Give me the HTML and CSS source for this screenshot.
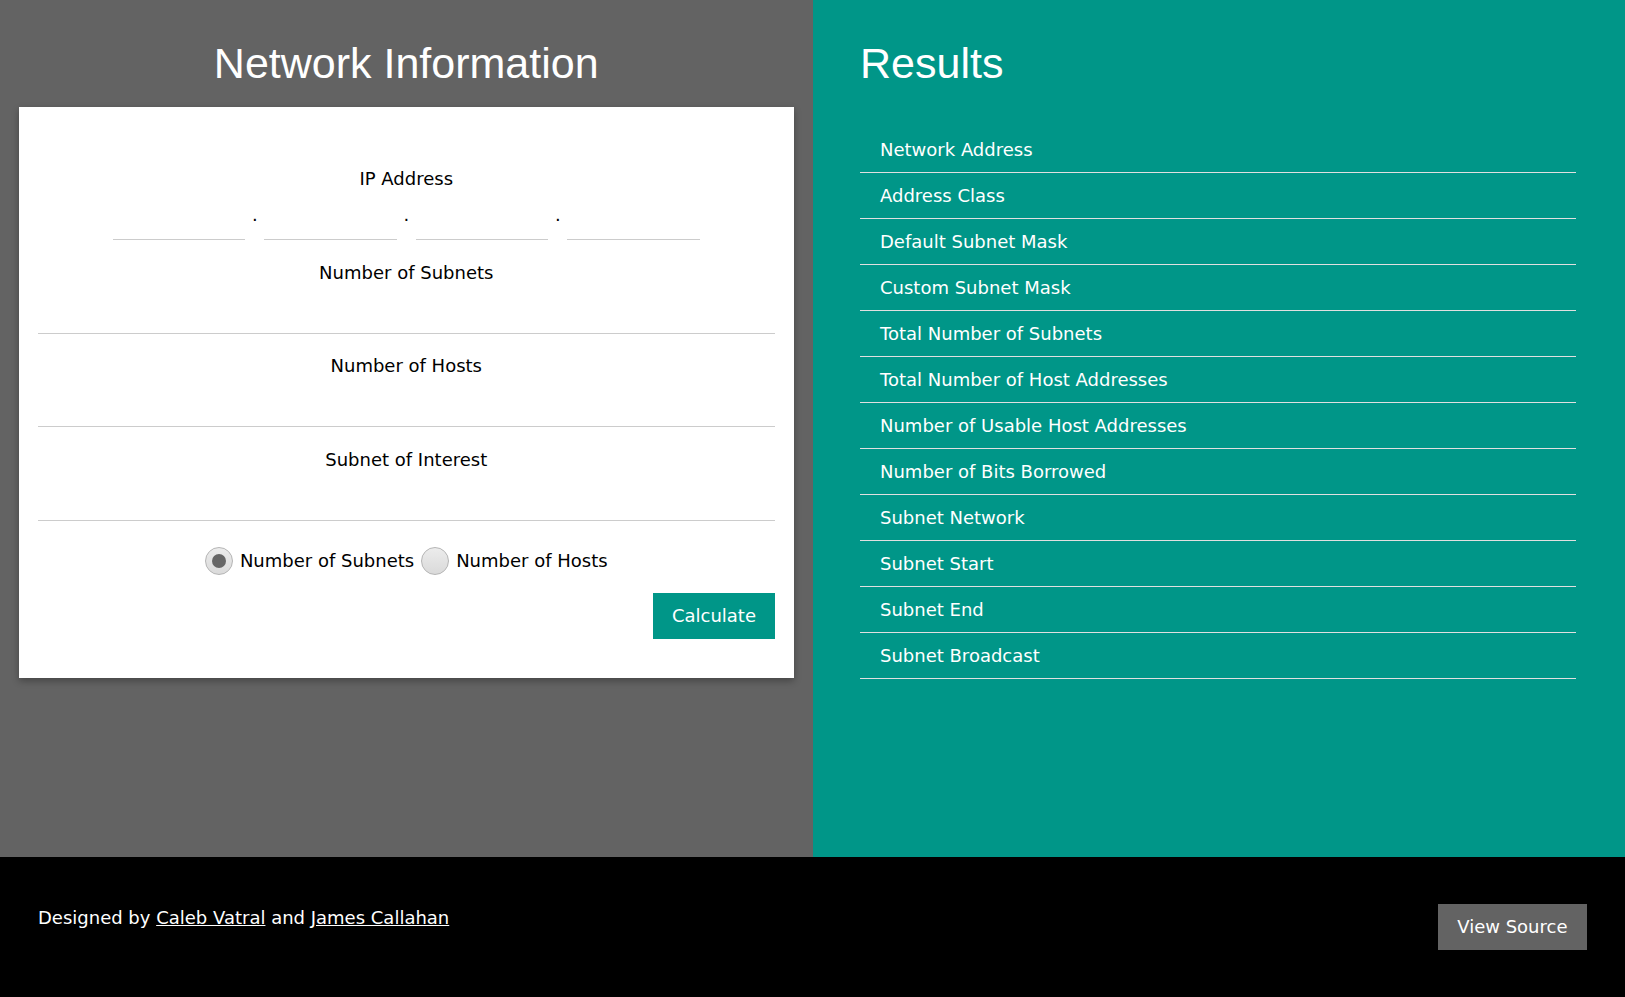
FILE: index.html
```html
<!DOCTYPE html>
<html lang="en">
<head>
<meta charset="utf-8">
<title>Subnet Calculator</title>
<link rel="stylesheet" href="styles.css">
</head>
<body>
<main class="layout">
  <section class="panel panel-info">
    <h1 class="panel-title panel-title-center">Network Information</h1>
    <form class="card">
      <div class="field">
        <label class="field-label">IP Address</label>
        <div class="ip-row">
          <input class="ip-octet" type="text"><span class="ip-dot">.</span><input class="ip-octet" type="text"><span class="ip-dot">.</span><input class="ip-octet" type="text"><span class="ip-dot">.</span><input class="ip-octet" type="text">
        </div>
      </div>
      <div class="field">
        <label class="field-label">Number of Subnets</label>
        <input class="field-input" type="text">
      </div>
      <div class="field">
        <label class="field-label">Number of Hosts</label>
        <input class="field-input" type="text">
      </div>
      <div class="field">
        <label class="field-label">Subnet of Interest</label>
        <input class="field-input" type="text">
      </div>
      <div class="radio-row">
        <input class="radio" type="radio" name="mode" id="mode-subnets" checked>
        <label class="radio-label" for="mode-subnets">Number of Subnets</label>
        <input class="radio" type="radio" name="mode" id="mode-hosts">
        <label class="radio-label" for="mode-hosts">Number of Hosts</label>
      </div>
      <div class="actions">
        <button class="btn btn-teal" type="button">Calculate</button>
      </div>
    </form>
  </section>
  <section class="panel panel-results">
    <h1 class="panel-title">Results</h1>
    <ul class="results-list">
      <li class="result-item">Network Address</li>
      <li class="result-item">Address Class</li>
      <li class="result-item">Default Subnet Mask</li>
      <li class="result-item">Custom Subnet Mask</li>
      <li class="result-item">Total Number of Subnets</li>
      <li class="result-item">Total Number of Host Addresses</li>
      <li class="result-item">Number of Usable Host Addresses</li>
      <li class="result-item">Number of Bits Borrowed</li>
      <li class="result-item">Subnet Network</li>
      <li class="result-item">Subnet Start</li>
      <li class="result-item">Subnet End</li>
      <li class="result-item">Subnet Broadcast</li>
    </ul>
  </section>
</main>
<footer class="footer">
  <p class="footer-text">Designed by <a class="footer-link" href="#">Caleb Vatral</a> and <a class="footer-link" href="#">James Callahan</a></p>
  <a class="btn btn-gray" href="#">View Source</a>
</footer>
</body>
</html>
```

FILE: styles.css
```css
* {
  box-sizing: border-box;
}

html, body {
  margin: 0;
  padding: 0;
}

body {
  font-family: "DejaVu Sans", Verdana, sans-serif;
  font-size: 18px;
  line-height: 22px;
  color: #000;
  background: #000;
}

.layout {
  display: grid;
  grid-template-columns: 1fr 1fr;
  height: 857px;
}

.panel {
  padding-top: 39px;
}

.panel-info {
  background: #636363;
  padding-left: 19px;
  padding-right: 19px;
}

.panel-results {
  background: #009688;
  padding-left: 47.5px;
  padding-right: 49px;
}

.panel-title {
  margin: 0;
  font-family: "Liberation Sans", Arial, sans-serif;
  font-weight: normal;
  font-size: 43px;
  line-height: 49px;
  color: #fff;
}

.panel-title-center {
  text-align: center;
}

.card {
  margin-top: 19px;
  background: #fff;
  padding: 61px 19px 39px;
  box-shadow: 0 3px 7px rgba(0, 0, 0, 0.3);
}

.field + .field {
  margin-top: 21.5px;
}

.field-label {
  display: block;
  text-align: center;
  line-height: 22px;
}

.field-input,
.ip-octet {
  display: block;
  height: 50px;
  border: none;
  border-bottom: 1px solid #cccccc;
  background: transparent;
  font-family: inherit;
  font-size: 18px;
  text-align: center;
  outline: none;
  padding: 0;
  border-radius: 0;
}

.field-input {
  width: 100%;
}

.ip-row {
  display: flex;
  justify-content: center;
  align-items: center;
  height: 50px;
}

.ip-octet {
  width: 132.5px;
}

.ip-dot {
  width: 19px;
  text-align: center;
  line-height: 22px;
}

.radio-row {
  margin-top: 26px;
  height: 28px;
  display: flex;
  justify-content: center;
  align-items: center;
  gap: 7px;
}

.radio {
  appearance: none;
  -webkit-appearance: none;
  margin: 0;
  width: 28px;
  height: 28px;
  border-radius: 50%;
  border: 1px solid #b5b5b5;
  background: linear-gradient(#ececec, #dadada);
  position: relative;
  flex: none;
}

.radio:checked::after {
  content: "";
  position: absolute;
  left: 6px;
  top: 6px;
  width: 14px;
  height: 14px;
  border-radius: 50%;
  background: #666;
}

.radio-label {
  line-height: 22px;
}

.actions {
  margin-top: 18.5px;
  display: flex;
  justify-content: flex-end;
}

.btn {
  display: inline-block;
  border: none;
  padding: 12px 18.5px;
  font-family: "DejaVu Sans", Verdana, sans-serif;
  font-size: 18px;
  line-height: 22px;
  color: #fff;
  text-decoration: none;
  cursor: pointer;
}

.btn-teal {
  background: #009688;
}

.btn-gray {
  background: #636363;
  padding: 12px 19.5px;
}

.results-list {
  list-style: none;
  margin: 39px 0 0;
  padding: 0;
}

.result-item {
  padding: 12px 18px 11px 20px;
  line-height: 22px;
  color: #fff;
  border-bottom: 1px solid #e0e0e0;
}

.footer {
  height: 140px;
  background: #000;
  display: flex;
  justify-content: space-between;
  align-items: center;
  padding: 0 38px 0 38px;
}

.footer-text {
  margin: 0 0 18px;
  color: #fff;
}

.footer-link {
  color: #fff;
  text-decoration: underline;
}
```
